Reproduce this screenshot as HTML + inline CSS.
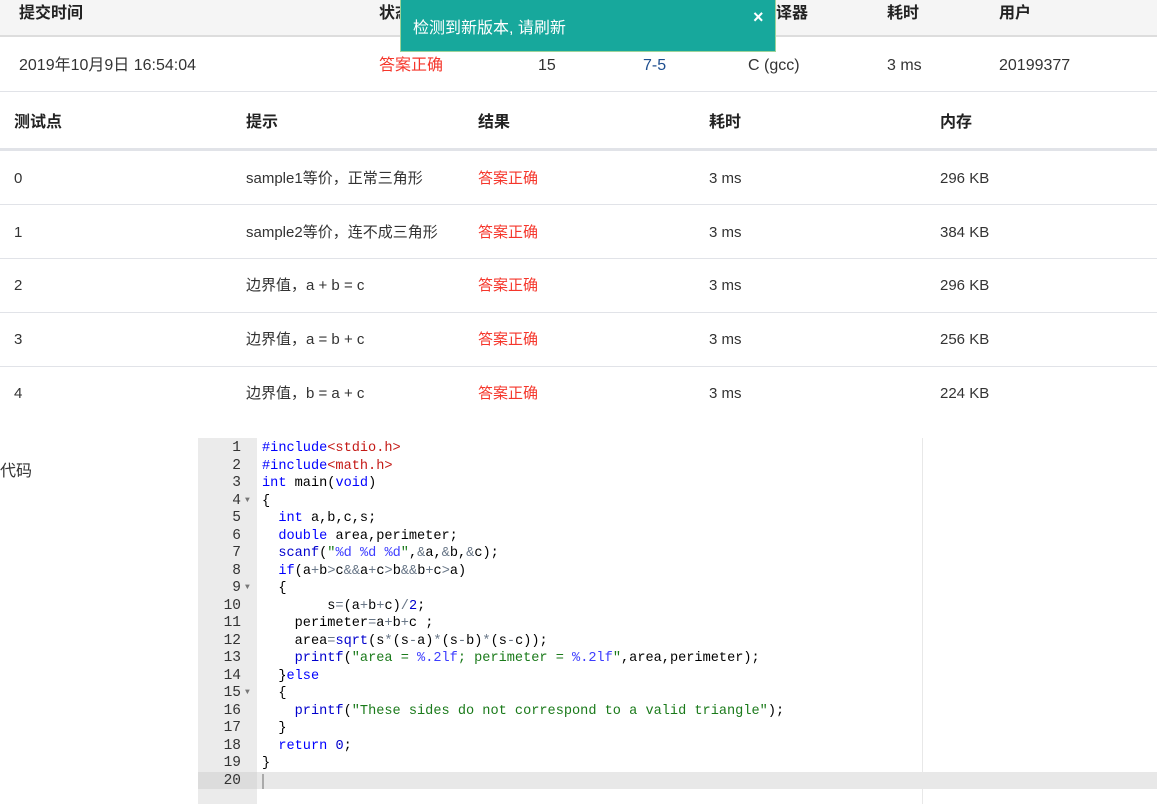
<!DOCTYPE html>
<html><head><meta charset="utf-8"><style>
*{margin:0;padding:0;box-sizing:border-box}
body{width:1176px;height:804px;background:#fff;position:relative;overflow:hidden;font-family:"Liberation Sans","Noto Sans CJK SC",sans-serif;color:#333;font-size:15px}
.a{position:absolute;white-space:nowrap;line-height:20px;padding-top:2px}
.b{font-weight:bold;font-size:16px;color:#222}
.r{color:#f5362b}
.hl{position:absolute;left:0;width:1157px;height:1px;background:#e1e3e8}
.code{position:absolute;left:198px;top:438px;width:959px;height:366px;font-family:"Liberation Mono",monospace;font-size:13.6px}
.gut{position:absolute;left:0;top:0;width:59px;height:366px;background:#ebebeb}
.ln{position:absolute;left:0;width:43px;text-align:right;color:#333;font-size:14.5px;line-height:17px;margin-top:1px}
.cl{position:absolute;left:64px;white-space:pre;color:#000;line-height:17px;margin-top:1px}
.k{color:#0000ff}.s{color:#1a7a1a}.m{color:#c41a16}.o{color:#687687}.n{color:#0000cd}.p{color:#3d3dff}
.fold{position:absolute;left:47px;font-size:8px;color:#777}
</style></head><body>
<div class="a" style="left:0;top:0;width:1157px;height:37px;background:#f5f5f5;border-bottom:2px solid #ddd"></div>
<div class="a b" style="left:19px;top:2px">提交时间</div>
<div class="a b" style="left:379px;top:2px">状态</div>
<div class="a b" style="left:776px;top:2px">译器</div>
<div class="a b" style="left:887px;top:2px">耗时</div>
<div class="a b" style="left:999px;top:2px">用户</div>
<div class="a" style="left:19px;top:54px;font-size:16px">2019年10月9日 16:54:04</div>
<div class="a r" style="left:379px;top:54px;font-size:16px">答案正确</div>
<div class="a" style="left:538px;top:54px;font-size:16px">15</div>
<div class="a" style="left:643px;top:54px;font-size:16px;color:#1d4e8f">7-5</div>
<div class="a" style="left:748px;top:54px;font-size:16px">C (gcc)</div>
<div class="a" style="left:887px;top:54px;font-size:16px">3 ms</div>
<div class="a" style="left:999px;top:54px;font-size:16px">20199377</div>
<div class="hl" style="top:91px"></div>
<div class="a b" style="left:14px;top:111px">测试点</div>
<div class="a b" style="left:246px;top:111px">提示</div>
<div class="a b" style="left:478px;top:111px">结果</div>
<div class="a b" style="left:709px;top:111px">耗时</div>
<div class="a b" style="left:940px;top:111px">内存</div>
<div class="hl" style="top:148px;height:3px"></div>
<div class="a" style="left:14px;top:167px">0</div><div class="a" style="left:246px;top:167px">sample1等价，正常三角形</div><div class="a r" style="left:478px;top:167px">答案正确</div><div class="a" style="left:709px;top:167px">3 ms</div><div class="a" style="left:940px;top:167px">296 KB</div>
<div class="hl" style="top:204px"></div>
<div class="a" style="left:14px;top:221px">1</div><div class="a" style="left:246px;top:221px">sample2等价，连不成三角形</div><div class="a r" style="left:478px;top:221px">答案正确</div><div class="a" style="left:709px;top:221px">3 ms</div><div class="a" style="left:940px;top:221px">384 KB</div>
<div class="hl" style="top:258px"></div>
<div class="a" style="left:14px;top:274px">2</div><div class="a" style="left:246px;top:274px">边界值，a + b = c</div><div class="a r" style="left:478px;top:274px">答案正确</div><div class="a" style="left:709px;top:274px">3 ms</div><div class="a" style="left:940px;top:274px">296 KB</div>
<div class="hl" style="top:312px"></div>
<div class="a" style="left:14px;top:328px">3</div><div class="a" style="left:246px;top:328px">边界值，a = b + c</div><div class="a r" style="left:478px;top:328px">答案正确</div><div class="a" style="left:709px;top:328px">3 ms</div><div class="a" style="left:940px;top:328px">256 KB</div>
<div class="hl" style="top:366px"></div>
<div class="a" style="left:14px;top:382px">4</div><div class="a" style="left:246px;top:382px">边界值，b = a + c</div><div class="a r" style="left:478px;top:382px">答案正确</div><div class="a" style="left:709px;top:382px">3 ms</div><div class="a" style="left:940px;top:382px">224 KB</div>
<div class="a" style="left:0;top:460px;font-size:16px">代码</div>

<div class="code">
<div class="gut"></div>
<div style="position:absolute;left:0;top:334px;width:959px;height:17px;background:#e8e8e8"></div>
<div style="position:absolute;left:0;top:334px;width:59px;height:17px;background:#dcdcdc"></div>
<div style="position:absolute;left:724px;top:0;width:1px;height:366px;background:#e8e8e8"></div>
<div style="position:absolute;left:64px;top:336px;width:2px;height:15px;background:#aaa"></div>
<div class="ln" style="top:1px">1</div><div class="cl" style="top:1px"><span class="k">#include</span><span class="m">&lt;stdio.h&gt;</span></div>
<div class="ln" style="top:18.5px">2</div><div class="cl" style="top:18.5px"><span class="k">#include</span><span class="m">&lt;math.h&gt;</span></div>
<div class="ln" style="top:36px">3</div><div class="cl" style="top:36px"><span class="k">int</span> main(<span class="k">void</span>)</div>
<div class="ln" style="top:53.5px">4</div><div class="fold" style="top:58px">▼</div><div class="cl" style="top:53.5px">{</div>
<div class="ln" style="top:71px">5</div><div class="cl" style="top:71px">  <span class="k">int</span> a,b,c,s;</div>
<div class="ln" style="top:88.5px">6</div><div class="cl" style="top:88.5px">  <span class="k">double</span> area,perimeter;</div>
<div class="ln" style="top:106px">7</div><div class="cl" style="top:106px">  <span class="n">scanf</span>(<span class="s">"</span><span class="p">%d</span> <span class="p">%d</span> <span class="p">%d</span><span class="s">"</span>,<span class="o">&amp;</span>a,<span class="o">&amp;</span>b,<span class="o">&amp;</span>c);</div>
<div class="ln" style="top:123.5px">8</div><div class="cl" style="top:123.5px">  <span class="k">if</span>(a<span class="o">+</span>b<span class="o">&gt;</span>c<span class="o">&amp;&amp;</span>a<span class="o">+</span>c<span class="o">&gt;</span>b<span class="o">&amp;&amp;</span>b<span class="o">+</span>c<span class="o">&gt;</span>a)</div>
<div class="ln" style="top:141px">9</div><div class="fold" style="top:145px">▼</div><div class="cl" style="top:141px">  {</div>
<div class="ln" style="top:158.5px">10</div><div class="cl" style="top:158.5px">        s<span class="o">=</span>(a<span class="o">+</span>b<span class="o">+</span>c)<span class="o">/</span><span class="n">2</span>;</div>
<div class="ln" style="top:176px">11</div><div class="cl" style="top:176px">    perimeter<span class="o">=</span>a<span class="o">+</span>b<span class="o">+</span>c ;</div>
<div class="ln" style="top:193.5px">12</div><div class="cl" style="top:193.5px">    area<span class="o">=</span><span class="n">sqrt</span>(s<span class="o">*</span>(s<span class="o">-</span>a)<span class="o">*</span>(s<span class="o">-</span>b)<span class="o">*</span>(s<span class="o">-</span>c));</div>
<div class="ln" style="top:211px">13</div><div class="cl" style="top:211px">    <span class="n">printf</span>(<span class="s">"area = </span><span class="p">%.2lf</span><span class="s">; perimeter = </span><span class="p">%.2lf</span><span class="s">"</span>,area,perimeter);</div>
<div class="ln" style="top:228.5px">14</div><div class="cl" style="top:228.5px">  }<span class="k">else</span></div>
<div class="ln" style="top:246px">15</div><div class="fold" style="top:250px">▼</div><div class="cl" style="top:246px">  {</div>
<div class="ln" style="top:263.5px">16</div><div class="cl" style="top:263.5px">    <span class="n">printf</span>(<span class="s">"These sides do not correspond to a valid triangle"</span>);</div>
<div class="ln" style="top:281px">17</div><div class="cl" style="top:281px">  }</div>
<div class="ln" style="top:298.5px">18</div><div class="cl" style="top:298.5px">  <span class="k">return</span> <span class="n">0</span>;</div>
<div class="ln" style="top:316px">19</div><div class="cl" style="top:316px">}</div>
<div class="ln" style="top:334px">20</div>
</div>

<div class="a" style="left:400px;top:0;width:376px;height:52px;background:#17a89c;border:1px solid #9ed39a;border-top:none"></div>
<div class="a" style="left:413px;top:17px;color:#fff;font-size:16px">检测到新版本, 请刷新</div>
<div class="a" style="left:753px;top:5px;color:#fff;font-size:18px;font-weight:bold">×</div>
</body></html>
